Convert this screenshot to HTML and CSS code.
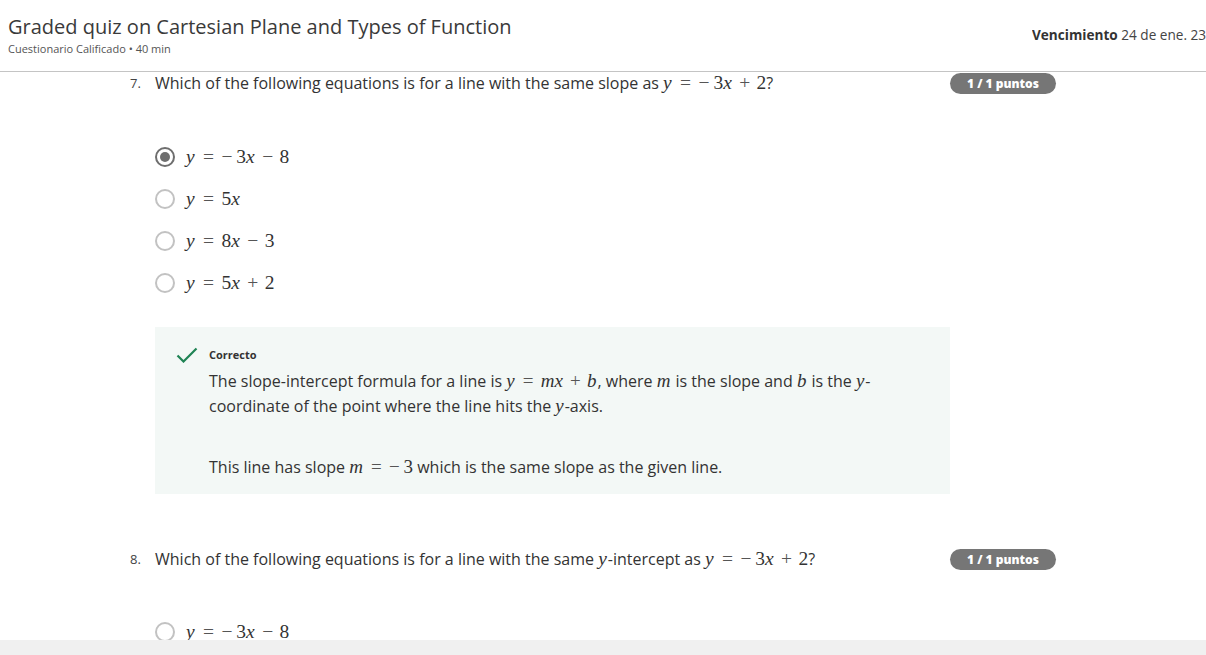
FILE: index.html
```html
<!DOCTYPE html>
<html>
<head>
<meta charset="utf-8">
<link rel="stylesheet" href="styles.css">
</head>
<body>
<header class="header">
  <div class="title-block">
    <h1 class="title">Graded quiz on Cartesian Plane and Types of Function</h1>
    <div class="subtitle">Cuestionario Calificado • 40 min</div>
  </div>
  <div class="due"><b>Vencimiento</b> 24 de ene. 23:59 CET</div>
</header>
<main class="content">
  <section class="question">
    <div class="q-row">
      <span class="q-num">7.</span>
      <div class="q-text">Which of the following equations is for a line with the same slope as <span class="m"><i>y</i><span class="rel">=</span><span class="neg">−</span>3<i>x</i><span class="bin">+</span>2</span>?</div>
      <span class="badge">1 / 1 puntos</span>
    </div>
    <ul class="options">
      <li class="option"><span class="radio checked"></span><span class="m"><i>y</i><span class="rel">=</span><span class="neg">−</span>3<i>x</i><span class="bin">−</span>8</span></li>
      <li class="option"><span class="radio"></span><span class="m"><i>y</i><span class="rel">=</span>5<i>x</i></span></li>
      <li class="option"><span class="radio"></span><span class="m"><i>y</i><span class="rel">=</span>8<i>x</i><span class="bin">−</span>3</span></li>
      <li class="option"><span class="radio"></span><span class="m"><i>y</i><span class="rel">=</span>5<i>x</i><span class="bin">+</span>2</span></li>
    </ul>
    <div class="feedback">
      <svg class="check" width="22" height="16" viewBox="0 0 22 16"><path d="M1.5 8.5 L7.5 14.5 L20.5 1.5" fill="none" stroke="#1f8354" stroke-width="2.2"/></svg>
      <div class="fb-body">
        <div class="fb-label">Correcto</div>
        <p class="fb-p">The slope-intercept formula for a line is <span class="m"><i>y</i><span class="rel">=</span><i>mx</i><span class="bin">+</span><i>b</i></span>, where <span class="m"><i>m</i></span> is the slope and <span class="m"><i>b</i></span> is the <span class="m"><i>y</i></span>-coordinate of the point where the line hits the <span class="m"><i>y</i></span>-axis.</p>
        <p class="fb-p fb-p2">This line has slope <span class="m"><i>m</i><span class="rel">=</span><span class="neg">−</span>3</span> which is the same slope as the given line.</p>
      </div>
    </div>
  </section>
  <section class="question q8">
    <div class="q-row">
      <span class="q-num">8.</span>
      <div class="q-text">Which of the following equations is for a line with the same <span class="m"><i>y</i></span>-intercept as <span class="m"><i>y</i><span class="rel">=</span><span class="neg">−</span>3<i>x</i><span class="bin">+</span>2</span>?</div>
      <span class="badge">1 / 1 puntos</span>
    </div>
    <ul class="options">
      <li class="option"><span class="radio"></span><span class="m"><i>y</i><span class="rel">=</span><span class="neg">−</span>3<i>x</i><span class="bin">−</span>8</span></li>
    </ul>
  </section>
</main>
<div class="footer-bar"></div>
</body>
</html>
```

FILE: styles.css
```css
html, body {
  margin: 0;
  padding: 0;
  overflow: hidden;
  background: #fff;
}
body {
  font-family: "Open Sans", "Liberation Sans", sans-serif;
  color: #333;
  width: 1206px;
  height: 655px;
}
.header {
  display: flex;
  justify-content: space-between;
  align-items: flex-start;
  height: 71px;
  border-bottom: 1px solid #c4c4c4;
  box-sizing: content-box;
}
.title-block {
  padding: 13px 0 0 8px;
}
.title {
  margin: 0;
  font-size: 20px;
  font-weight: 400;
  line-height: 28px;
  color: #3a3a3a;
}
.subtitle {
  font-size: 11px;
  line-height: 15px;
  color: #555;
}
.due {
  flex: 0 0 174px;
  overflow: hidden;
  white-space: nowrap;
  font-size: 13.6px;
  line-height: 18px;
  padding-top: 26px;
  color: #444;
}
.due b {
  font-weight: 700;
  color: #333;
}
.content {
  padding-left: 130px;
  width: 926px;
}
.q-row {
  display: flex;
  align-items: flex-start;
  height: 22px;
}
.q-num {
  width: 25px;
  font-size: 13px;
  line-height: 22px;
  color: #444;
}
.q-text {
  flex: 1;
  font-size: 16px;
  line-height: 22px;
  color: #333;
  white-space: nowrap;
}
.badge {
  flex: 0 0 106px;
  height: 21px;
  margin-top: 1px;
  border-radius: 11px;
  background: #767676;
  color: #fff;
  font-size: 12px;
  font-weight: 800;
  line-height: 21px;
  text-align: center;
}
.options {
  list-style: none;
  margin: 42px 0 0 25px;
  padding: 0;
}
.option {
  display: flex;
  align-items: center;
  height: 42px;
}
.radio {
  width: 16px;
  height: 16px;
  border: 2px solid #c2c2c2;
  border-radius: 50%;
  margin-right: 11px;
  box-sizing: content-box;
  display: flex;
  align-items: center;
  justify-content: center;
}
.radio.checked {
  border-color: #6e6e6e;
}
.radio.checked::after {
  content: "";
  width: 10px;
  height: 10px;
  border-radius: 50%;
  background: #6e6e6e;
}
.m {
  font-family: "Liberation Serif", "DejaVu Serif", serif;
  font-size: 19.5px;
  color: #333;
  white-space: nowrap;
}
.m i {
  font-style: italic;
  margin-right: 0.05em;
}
.rel {
  margin: 0 0.38em;
  color: #555;
}
.bin {
  margin: 0 0.33em;
  color: #555;
}
.neg {
  color: #555;
  margin-right: 0.2em;
}
.feedback {
  display: flex;
  margin: 23px 0 0 25px;
  width: 795px;
  box-sizing: border-box;
  background: #f3f8f6;
  padding: 20px 60px 14px 21px;
}
.check {
  flex: 0 0 22px;
  margin-right: 11px;
}
.fb-body {
  flex: 1;
}
.fb-label {
  font-size: 11px;
  font-weight: 700;
  line-height: 16px;
  color: #333;
}
.fb-p {
  margin: 6px 0 0;
  font-size: 16px;
  line-height: 25px;
  color: #333;
}
.fb-p .m {
  font-size: 19px;
  line-height: 1;
}
.fb-p2 {
  margin-top: 36px;
}
.q8 {
  margin-top: 54px;
}
.q8 .options {
  margin-top: 41px;
}
.footer-bar {
  position: fixed;
  left: 0;
  right: 0;
  bottom: 0;
  height: 15px;
  background: #f0f0f0;
}
```
